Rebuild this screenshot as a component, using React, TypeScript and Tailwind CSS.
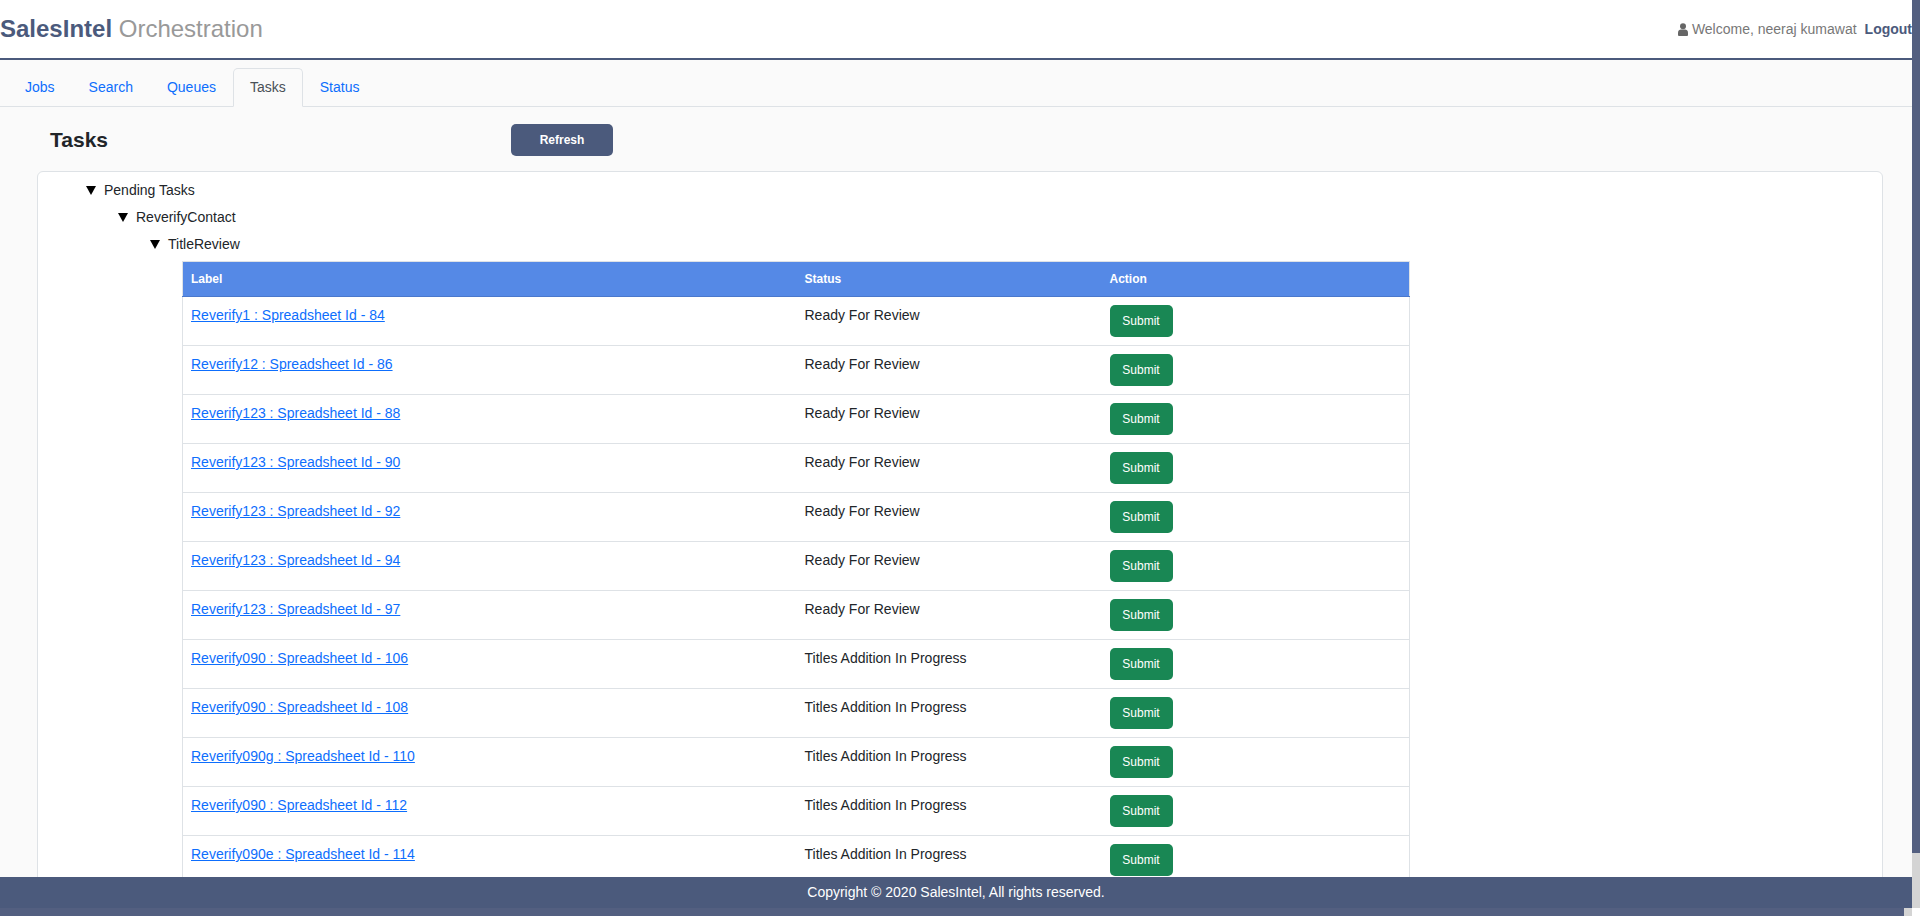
const tabs = ["Jobs", "Search", "Queues", "Tasks", "Status"];

const rows = [
  { label: "Reverify1 : Spreadsheet Id - 84", status: "Ready For Review" },
  { label: "Reverify12 : Spreadsheet Id - 86", status: "Ready For Review" },
  { label: "Reverify123 : Spreadsheet Id - 88", status: "Ready For Review" },
  { label: "Reverify123 : Spreadsheet Id - 90", status: "Ready For Review" },
  { label: "Reverify123 : Spreadsheet Id - 92", status: "Ready For Review" },
  { label: "Reverify123 : Spreadsheet Id - 94", status: "Ready For Review" },
  { label: "Reverify123 : Spreadsheet Id - 97", status: "Ready For Review" },
  { label: "Reverify090 : Spreadsheet Id - 106", status: "Titles Addition In Progress" },
  { label: "Reverify090 : Spreadsheet Id - 108", status: "Titles Addition In Progress" },
  { label: "Reverify090g : Spreadsheet Id - 110", status: "Titles Addition In Progress" },
  { label: "Reverify090 : Spreadsheet Id - 112", status: "Titles Addition In Progress" },
  { label: "Reverify090e : Spreadsheet Id - 114", status: "Titles Addition In Progress" },
];

const TreeLabel = ({ text }: { text: string }) => (
  <div className="flex h-[27px] items-center">
    <svg viewBox="0 0 10 9" className="mr-2 h-[9px] w-[10px] shrink-0 fill-black">
      <polygon points="0,0 10,0 5,9" />
    </svg>
    <span className="text-[14px] text-[#212529]">{text}</span>
  </div>
);

const TasksTable = () => (
  <table className="w-[1228px] table-fixed border-collapse border border-[#dee2e6] text-[14px] leading-[21px] text-[#212529]">
    <thead>
      <tr className="border-b border-[#4a78cc] bg-[#5589e6] text-left text-[12px] leading-[18px] font-bold text-white">
        <th className="w-[614px] p-2">Label</th>
        <th className="w-[305px] p-2">Status</th>
        <th className="p-2">Action</th>
      </tr>
    </thead>
    <tbody>
      {rows.map((row) => (
        <tr key={row.label} className="border-b border-[#dee2e6] bg-white">
          <td className="p-2 align-top">
            <a href="#" className="text-[#0d6efd] underline">
              {row.label}
            </a>
          </td>
          <td className="p-2 align-top">{row.status}</td>
          <td className="p-2 align-top">
            <button className="block h-8 w-[63px] rounded-[5px] bg-[#198754] text-[12px] text-white">
              Submit
            </button>
          </td>
        </tr>
      ))}
    </tbody>
  </table>
);

const App = () => {
  return (
    <div className="flex h-screen w-full overflow-hidden bg-white font-['Liberation_Sans',Arial,sans-serif]">
      <div className="flex min-w-0 flex-1 flex-col">
        <header className="flex h-[60px] shrink-0 items-center justify-between border-b-2 border-[#4b5a7c] bg-white">
          <div className="text-[24px] leading-none">
            <span className="font-bold text-[#4b5a7c]">SalesIntel</span>{" "}
            <span className="text-[#999999]">Orchestration</span>
          </div>
          <div className="flex items-center text-[14px] text-[#777777]">
            <svg viewBox="0 0 10 13" className="mr-1 h-[13px] w-[10px] fill-[#666666]">
              <circle cx="5" cy="3.2" r="3" />
              <path d="M0 12V9.5C0 7.5 1.5 6.5 3 6.5h4c1.5 0 3 1 3 3V12q0 1-1 1H1q-1 0-1-1z" />
            </svg>
            <span>Welcome, neeraj kumawat</span>
            <a href="#" className="ml-2 font-bold text-[#4b5a7c]">
              Logout
            </a>
          </div>
        </header>

        <div className="min-h-0 flex-1 overflow-hidden bg-[#fafafa]">
          <nav className="flex border-b border-[#dee2e6] pt-2 pl-2 text-[14px] leading-[21px]">
            {tabs.map((tab) =>
              tab === "Tasks" ? (
                <a
                  key={tab}
                  href="#"
                  className="-mb-px rounded-t-[5px] border border-[#dee2e6] border-b-[#fafafa] bg-[#fafafa] px-4 py-2 text-[#495057]"
                >
                  {tab}
                </a>
              ) : (
                <a key={tab} href="#" className="border border-transparent px-4 pt-2 pb-[7px] text-[#0d6efd]">
                  {tab}
                </a>
              )
            )}
          </nav>

          <div className="mt-[17px] flex h-[32px] items-center pl-[50px]">
            <h1 className="w-[461px] text-[21px] font-bold text-[#212529]">Tasks</h1>
            <button className="h-8 w-[102px] rounded-[5px] bg-[#4b5a7c] text-[12px] font-bold text-white">
              Refresh
            </button>
          </div>

          <div className="mt-[15px] ml-[37px] w-[1846px] rounded-t-[6px] border border-[#dee2e6] bg-white pt-[5px] pl-[48px]">
            <TreeLabel text="Pending Tasks" />
            <div className="pl-8">
              <TreeLabel text="ReverifyContact" />
              <div className="pl-8">
                <TreeLabel text="TitleReview" />
                <div className="mt-[3px] pl-8">
                  <TasksTable />
                </div>
              </div>
            </div>
          </div>
        </div>

        <footer className="h-[31px] shrink-0 bg-[#4b5a7c] text-center text-[14px] leading-[30px] text-white">
          Copyright © 2020 SalesIntel, All rights reserved.
        </footer>

        {/* horizontal scrollbar */}
        <div className="flex h-2 shrink-0 bg-[#d4d4d4]">
          <div className="w-[1904px] bg-[#535f80]" />
        </div>
      </div>

      {/* vertical scrollbar */}
      <div className="flex h-full w-2 shrink-0 flex-col bg-white">
        <div className="h-[853px] bg-[#535f80]" />
        <div className="h-[55px] bg-[#d4d4d4]" />
      </div>
    </div>
  );
};

export default App;
